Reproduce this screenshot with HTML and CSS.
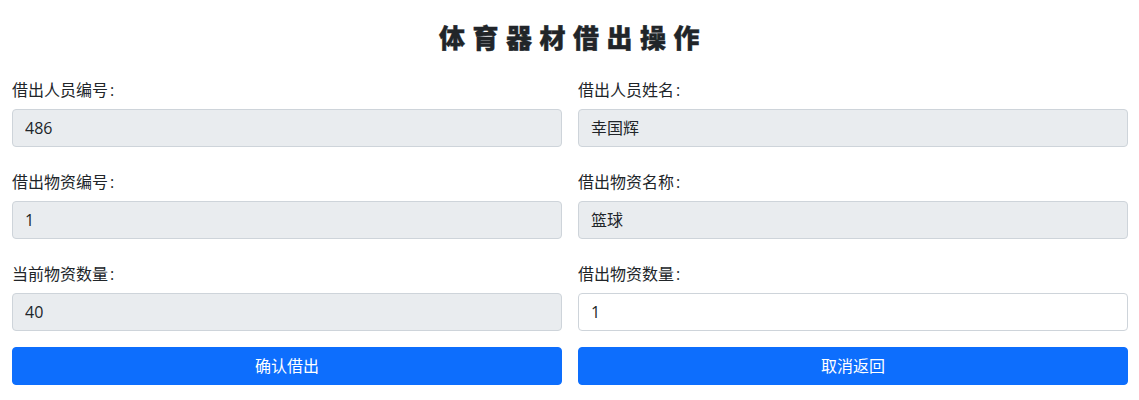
FILE: index.html
```html
<!DOCTYPE html>
<html lang="zh-CN">
<head>
  <meta charset="UTF-8" />
  <meta name="viewport" content="width=device-width, initial-scale=1.0"/>
  <title>体育器材借出操作</title>
  <link rel="stylesheet" href="styles.css">
</head>
<body>
  <h2 class="title">体育器材借出操作</h2>
  <form class="lend-form">
    <div class="field">
      <label for="user-id">借出人员编号<span class="colon">:</span></label>
      <input type="text" class="form-control" id="user-id" value="486" readonly>
    </div>
    <div class="field">
      <label for="user-name">借出人员姓名<span class="colon">:</span></label>
      <input type="text" class="form-control form-control-zh" id="user-name" value="幸国辉" readonly>
    </div>
    <div class="field">
      <label for="item-id">借出物资编号<span class="colon">:</span></label>
      <input type="text" class="form-control" id="item-id" value="1" readonly>
    </div>
    <div class="field">
      <label for="item-name">借出物资名称<span class="colon">:</span></label>
      <input type="text" class="form-control form-control-zh" id="item-name" value="篮球" readonly>
    </div>
    <div class="field">
      <label for="stock">当前物资数量<span class="colon">:</span></label>
      <input type="text" class="form-control" id="stock" value="40" readonly>
    </div>
    <div class="field">
      <label for="amount">借出物资数量<span class="colon">:</span></label>
      <input type="text" class="form-control" id="amount" value="1">
    </div>
    <button type="submit" class="btn">确认借出</button>
    <button type="button" class="btn">取消返回</button>
  </form>
</body>
</html>
```
FILE: styles.css
```css
* {
  box-sizing: border-box;
}

body {
  margin: 0;
  padding: 0 11px 0 12px;
  font-family: "Open Sans", "Noto Sans CJK SC", sans-serif;
  font-size: 16px;
  line-height: 24px;
  color: #212529;
  background: #fff;
}

.title {
  margin: 0;
  padding: 18px 0 22px 6px;
  font-family: "STXingkai", "Noto Sans CJK SC", sans-serif;
  font-size: 26px;
  font-weight: 900;
  line-height: 38px;
  letter-spacing: 7.5px;
  text-align: center;
  -webkit-text-stroke: 0.4px #212529;
}

.lend-form {
  display: grid;
  grid-template-columns: 1fr 1fr;
  column-gap: 16px;
}

.field {
  height: 92px;
}

/* last row sits closer to the buttons */
.field:nth-child(5),
.field:nth-child(6) {
  height: 85px;
}

.field label {
  display: block;
  height: 24px;
  margin-bottom: 7px;
}

.colon {
  margin-left: 2px;
}

.form-control {
  display: block;
  width: 100%;
  height: 38px;
  padding: 6px 12px;
  font: inherit;
  color: #212529;
  background: #fff;
  border: 1px solid #ced4da;
  border-radius: 4px;
}

.form-control-zh {
  padding: 5px 12px 7px;
}

.form-control[readonly] {
  background: #e9ecef;
}

.btn {
  height: 38px;
  padding: 6px 12px;
  font: inherit;
  color: #fff;
  background: #0d6efd;
  border: 1px solid #0d6efd;
  border-radius: 4px;
  cursor: pointer;
}
```
